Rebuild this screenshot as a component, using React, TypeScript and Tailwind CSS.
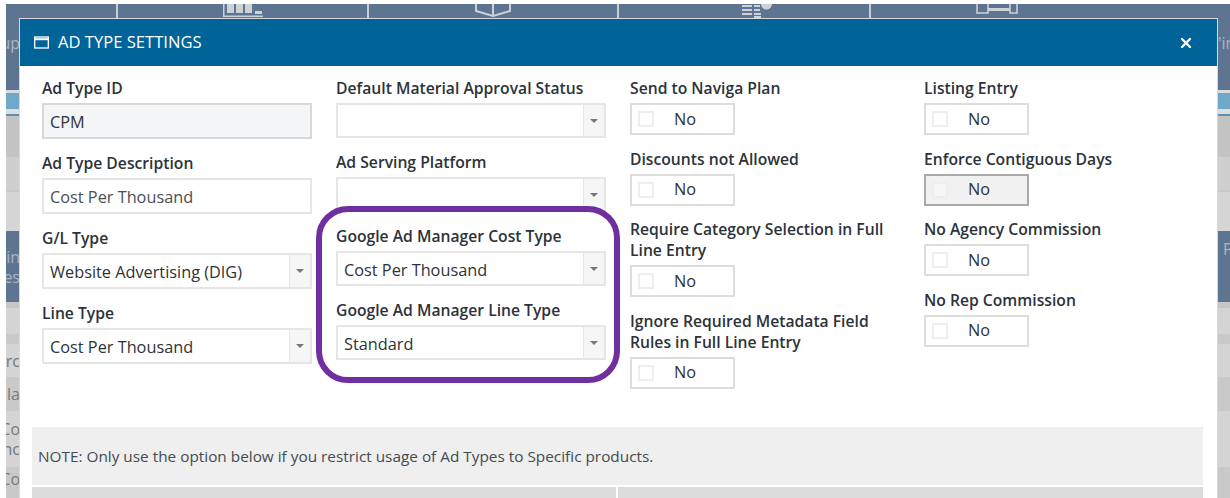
import type { ReactNode } from "react"
import { X } from "lucide-react"

const font = "font-['Open_Sans','Noto_Sans',sans-serif]"

function Label({ children }: { children: ReactNode }) {
  return <div className="text-[15.7px] leading-[21px] font-semibold text-[#2c333b]">{children}</div>
}

function SelectBox({ value, short }: { value?: string; short?: boolean }) {
  return (
    <div className={"mt-[4px] flex w-[270px] border-2 border-[#e6e6e6] bg-white " + (short ? "h-[35px]" : "h-[36px]")}>
      <div className="flex-1 pl-[6px] text-[16.3px] leading-[34px] whitespace-nowrap text-[#2e3338]">{value}</div>
      <div className="flex w-[21px] items-center justify-center border-l border-[#e6e6e6] bg-[#f6f6f6]">
        <div className="h-0 w-0 border-x-[4px] border-t-[4px] border-x-transparent border-t-[#777]" />
      </div>
    </div>
  )
}

function TextBox({ value, disabled }: { value: string; disabled?: boolean }) {
  return (
    <div
      className={
        "mt-[4px] h-[36px] w-[270px] border-2 pl-[6px] text-[16.3px] leading-[34px] " +
        (disabled ? "border-[#d8d8d8] bg-[#f4f5f6] text-[#2e3338]" : "border-[#e6e6e6] bg-white text-[#4a4f55]")
      }
    >
      {value}
    </div>
  )
}

function Toggle({ active }: { active?: boolean }) {
  return (
    <div
      className={
        "mt-[4px] flex h-[32px] w-[105px] items-center border-2 pl-[6px] " +
        (active ? "border-[#aaa] bg-[#f1f1f1]" : "border-[#ddd] bg-white")
      }
    >
      <div className="h-[16px] w-[16px] border-2 border-[#eee] bg-white/40" />
      <span className="ml-[20px] text-[16.3px] leading-none text-[#2e3338]">No</span>
    </div>
  )
}

function Field({ label, className, children }: { label: ReactNode; className?: string; children: ReactNode }) {
  return (
    <div className={className}>
      <Label>{label}</Label>
      {children}
    </div>
  )
}

// a strip of the page behind the dialog, only its ends show
function Band({ className, left, right }: { className: string; left?: ReactNode; right?: ReactNode }) {
  return (
    <div className={"flex items-center justify-between text-[16px] leading-[20px] " + className}>
      <div className="flex w-[14px] justify-end overflow-hidden whitespace-nowrap">
        <div className="shrink-0 text-right">{left}</div>
      </div>
      <div className="w-[12px] overflow-hidden whitespace-nowrap">{right}</div>
    </div>
  )
}

function NavIcons() {
  return (
    <div className="flex h-[14px] text-[#cdd2d8]">
      <div className="w-[112px] border-r-2 border-[#c9ced4]" />
      <div className="flex w-[251px] justify-center border-r-2 border-[#c9ced4]">
        <svg width="40" height="14" viewBox="0 0 40 14" fill="currentColor">
          <path d="M0 0h1.5v11.5H40V13H0z" />
          <rect x="4" y="0" width="7" height="9" />
          <rect x="13" y="0" width="7" height="9" />
          <rect x="22" y="0" width="7" height="9" />
          <rect x="32" y="7" width="7" height="3" />
        </svg>
      </div>
      <div className="flex w-[250px] justify-center border-r-2 border-[#c9ced4]">
        <svg width="36" height="14" viewBox="0 0 36 14" fill="none" stroke="currentColor" strokeWidth="2">
          <path d="M1 0v7l17 5 17-5V0" />
          <path d="M18 0v12" />
        </svg>
      </div>
      <div className="flex w-[252px] justify-center border-r-2 border-[#c9ced4]">
        <svg className="ml-[26px]" width="30" height="14" viewBox="0 0 30 14" fill="currentColor">
          <rect x="0" y="1" width="10" height="2" />
          <rect x="0" y="5" width="10" height="2" />
          <rect x="0" y="9" width="10" height="2" />
          <rect x="12" y="1" width="6" height="2" />
          <rect x="12" y="5" width="6" height="2" />
          <rect x="12" y="9" width="7" height="2" />
          <rect x="12" y="12" width="7" height="2" />
          <path d="M19 0h11a5.500 5.500 0 0 1-11 0z" />
        </svg>
      </div>
      <div className="flex w-[252px] justify-center">
        <svg width="42" height="14" viewBox="0 0 42 14" fill="none" stroke="currentColor" strokeWidth="1.600">
          <path d="M1 0v9h11V0M34 0v9h7V0" />
          <rect x="12" y="4" width="22" height="3" fill="currentColor" stroke="none" />
        </svg>
      </div>
    </div>
  )
}

export default function App() {
  return (
    <div className={"h-[498px] w-[1230px] overflow-hidden bg-white pl-[6px] pt-[4px] " + font}>
      <div className="relative h-[494px] w-[1224px] bg-[#c9c9c9] text-[#77797c]">
        {/* page behind the dialog */}
        <div className="h-[86px] bg-[#5d7590] text-[#aab6c4]">
          <NavIcons />
          <Band className="h-[50px]" left="up" right="'in" />
        </div>
        <div className="h-[3px] bg-[#d9dde0]" />
        <div className="h-[16px] bg-[#6fa8c8]" />
        <div className="h-[5px] bg-[#dedede]" />
        <div className="h-[2px] bg-[#5c93b3]" />
        <div className="h-[41px] bg-[#c4c4c4]" />
        <div className="h-[33px] bg-[#cfcfcf]" />
        <div className="h-[2px] bg-[#c9c9c9]" />
        <div className="h-[39px] bg-[#d6d6d6]" />
        <Band
          className="h-[71px] bg-[#5d7590] text-[#aab6c4]"
          left={<>in<br />pes</>}
          right={<span className="block pb-[35px] pl-[5px]">P</span>}
        />
        <div className="h-[6px] bg-[#c6c6c6]" />
        <div className="h-[26px] bg-[#d4d4d4]" />
        <div className="h-[10px] bg-[#c9c9c9]" />
        <Band className="h-[33px] bg-[#d4d4d4]" left="rc" />
        <Band className="h-[34px] bg-[#c9c9c9]" left="la" />
        <Band className="h-[56px] bg-[#d4d4d4]" left={<>Co<br />nc</>} />
        <Band className="h-[27px] bg-[#c9c9c9] pb-[4px]" left="Co" />

        {/* dialog */}
        <div className="absolute left-[13px] top-[14px] h-[480px] w-[1199px] border-x border-t border-[#d5dae0] bg-white">
          <div className="flex h-[47px] items-center bg-[#006499] pl-[14px] pr-[23px] text-white">
            <svg width="15" height="13" viewBox="0 0 15 13" fill="none" stroke="currentColor" strokeWidth="1.300">
              <rect x="0.700" y="1" width="13.600" height="11" />
              <path d="M0.700 3.200h13.600" strokeWidth="2" />
            </svg>
            <span className="ml-[9px] flex-1 text-[16.6px] leading-none">AD TYPE SETTINGS</span>
            <X size={16} strokeWidth={3.5} />
          </div>

          <div className="flex h-[361px] pl-[22px] pt-[12px]">
            <div className="w-[294px]">
              <Field label="Ad Type ID"><TextBox value="CPM" disabled /></Field>
              <Field label="Ad Type Description" className="mt-[14px]"><TextBox value="Cost Per Thousand" /></Field>
              <Field label="G/L Type" className="mt-[14px]"><SelectBox value="Website Advertising (DIG)" /></Field>
              <Field label="Line Type" className="mt-[14px]"><SelectBox value="Cost Per Thousand" /></Field>
            </div>
            <div className="w-[294px]">
              <Field label="Default Material Approval Status"><SelectBox short /></Field>
              <Field label="Ad Serving Platform" className="mt-[14px]"><SelectBox short /></Field>
              <div className="relative mt-[14px]">
                <Field label="Google Ad Manager Cost Type"><SelectBox short value="Cost Per Thousand" /></Field>
                <Field label="Google Ad Manager Line Type" className="mt-[14px]"><SelectBox short value="Standard" /></Field>
                {/* highlight ring */}
                <div className="absolute -left-[20px] -top-[20px] h-[177px] w-[304px] rounded-[32px] border-[6px] border-[#6f2f9f]" />
              </div>
            </div>
            <div className="w-[294px]">
              <Field label="Send to Naviga Plan"><Toggle /></Field>
              <Field label="Discounts not Allowed" className="mt-[13.5px]"><Toggle /></Field>
              <Field label={<>Require Category Selection in Full<br />Line Entry</>} className="mt-[13.5px]"><Toggle /></Field>
              <Field label={<>Ignore Required Metadata Field<br />Rules in Full Line Entry</>} className="mt-[13.5px]"><Toggle /></Field>
            </div>
            <div className="w-[270px]">
              <Field label="Listing Entry"><Toggle /></Field>
              <Field label="Enforce Contiguous Days" className="mt-[13.5px]"><Toggle active /></Field>
              <Field label="No Agency Commission" className="mt-[13.5px]"><Toggle /></Field>
              <Field label="No Rep Commission" className="mt-[13.5px]"><Toggle /></Field>
            </div>
          </div>

          <div className="ml-[12px] mr-[14px] h-[58px] bg-[#efefef] pl-[6px] text-[15.35px] leading-[59px] text-[#444b52]">
            NOTE: Only use the option below if you restrict usage of Ad Types to Specific products.
          </div>
          <div className="ml-[12px] mr-[14px] mt-[2px] flex h-[12px]">
            <div className="w-[586px] border-r-2 border-white bg-[#dcdcdc]" />
            <div className="flex-1 bg-[#dcdcdc]" />
          </div>
        </div>
      </div>
    </div>
  )
}
